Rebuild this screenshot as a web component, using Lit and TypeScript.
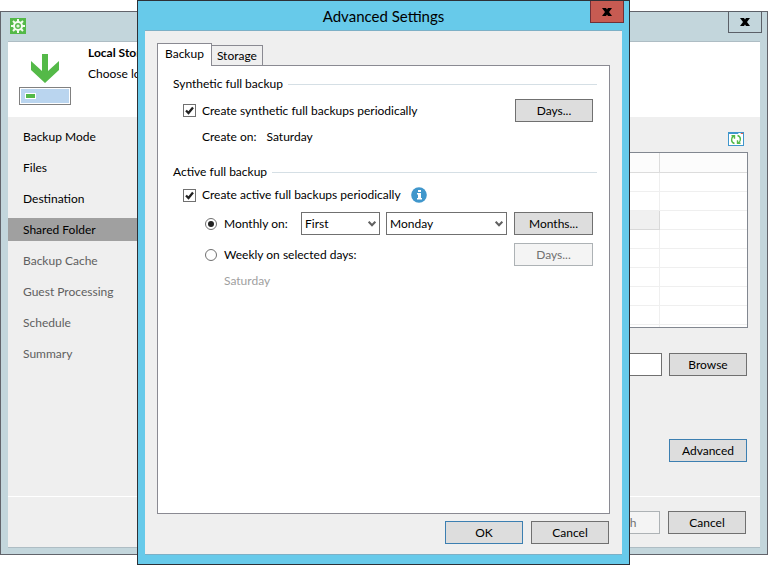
import { LitElement, html, css } from "lit";
import { customElement, property, state } from "lit/decorators.js";
import { classMap } from "lit/directives/class-map.js";

const controls = css`
  * {
    box-sizing: border-box;
  }
  button,
  input,
  select {
    font: inherit;
    color: inherit;
    margin: 0;
  }
  .btn {
    width: 78px;
    height: 23px;
    padding: 0;
    border: 1px solid #707070;
    border-radius: 0;
    background: #dddddd;
    line-height: 16px;
    flex: none;
  }
  .btn.focused {
    border-color: #3c7fb1;
  }
  .btn:disabled {
    background: #f4f4f4;
    border-color: #adb2b5;
    color: #707070;
  }
  .close {
    width: 34px;
    height: 22px;
    padding: 0;
    display: flex;
    align-items: center;
    justify-content: center;
    border-radius: 0;
  }
  svg {
    display: block;
  }
`;

const closeGlyph = html`<svg width="10" height="8" viewBox="0 0 10 8" aria-hidden="true">
  <path d="M0 0h4l1 1.6L6 0h4L7 4l3 4H6L5 6.4 4 8H0l3-4z" fill="#000" />
</svg>`;

@customElement("wizard-window")
export class WizardWindow extends LitElement {
  @state() steps = [
    { name: "Backup Mode", done: true },
    { name: "Files", done: true },
    { name: "Destination", done: true },
    { name: "Shared Folder", current: true, done: true },
    { name: "Backup Cache" },
    { name: "Guest Processing" },
    { name: "Schedule" },
    { name: "Summary" },
  ];

  static styles = [
    controls,
    css`
      :host {
        display: flex;
        flex-direction: column;
        box-sizing: border-box;
        border: 1px solid #62646b;
        background: #c3d6dc;
        padding: 0 7px 6px;
      }
      .titlebar {
        display: flex;
        justify-content: space-between;
        height: 29px;
        padding: 6px 0 0 2px;
      }
      .close {
        margin: -7px -2px 0 0;
        border: 1px solid #5b6068;
        background: #c3d6dc;
      }
      .client {
        flex: 1;
        display: flex;
        flex-direction: column;
        background: #efefef;
        border: solid #aebdc4;
        border-width: 1px 0;
      }
      header {
        display: flex;
        gap: 17px;
        height: 75px;
        padding: 3px 11px;
        background: #fff;
        white-space: nowrap;
      }
      .hero {
        margin-top: 9px;
      }
      h1 {
        margin: 0 0 5px;
        font-size: 12px;
        line-height: 16px;
        font-weight: 700;
      }
      p {
        margin: 0;
      }
      .body {
        flex: 1;
        display: flex;
      }
      nav {
        width: 160px;
        padding-top: 8px;
        display: flex;
        flex-direction: column;
        gap: 8px;
      }
      nav a {
        line-height: 23px;
        padding-left: 15px;
        color: #606060;
        text-decoration: none;
      }
      nav a.done {
        color: #000;
      }
      nav a.current {
        background: #a0a0a0;
      }
      main {
        flex: 1;
        padding: 15px 12px 0 10px;
        display: flex;
        flex-direction: column;
      }
      .refresh {
        align-self: flex-end;
        margin-right: 4px;
        padding: 0;
        border: 0;
        background: none;
      }
      table {
        margin-top: 6px;
        border: 1px solid #828790;
        background: #fff;
        border-collapse: separate;
        border-spacing: 0;
        table-layout: fixed;
        width: 100%;
      }
      th,
      td {
        height: 19px;
        padding: 0;
        border: solid #efefef;
        border-width: 0 1px 1px 0;
      }
      th {
        height: 20px;
        background: #fcfcfc;
        border-color: #dcdcdc;
      }
      tr > :last-child {
        width: 87px;
        border-right: 0;
      }
      .selected {
        background: #f0f0f0;
        border-color: #d9d9d9;
      }
      tfoot td {
        height: 2px;
        border-bottom: 0;
      }
      .path {
        display: flex;
        gap: 7px;
        margin: 25px 1px 63px 0;
      }
      .path input {
        flex: 1;
        min-width: 0;
        height: 23px;
        border: 1px solid #707070;
        background: #fff;
      }
      .advanced {
        align-self: flex-end;
        margin-right: 1px;
      }
      footer {
        display: flex;
        justify-content: flex-end;
        gap: 8px;
        padding: 14px 14px 13px;
        border-top: 1px solid #fff;
      }
    `,
  ];

  render() {
    return html`
      <div class="titlebar">
        <svg width="16" height="16" viewBox="0 0 16 16" aria-hidden="true">
          <rect width="16" height="16" fill="#54b948" />
          <g fill="none" stroke="#f4fcf0">
            <circle cx="8" cy="8" r="4" stroke-width="2" />
            <circle cx="8" cy="8" r="1" stroke-width="1.2" />
            <path
              d="M8 1v3M8 12v3M1 8h3M12 8h3M3 3l2.200 2.200M10.800 10.800 13 13M13 3l-2.200 2.200M5.200 10.800 3 13"
              stroke-width="2"
            />
          </g>
        </svg>
        <button class="close" aria-label="Close">${closeGlyph}</button>
      </div>
      <div class="client">
        <header>
          <svg class="hero" width="52" height="52" viewBox="0 0 52 52" aria-hidden="true">
            <path d="M23 0h6v17L40 7v9L26 29 12 16V7l11 10z" fill="#54b948" />
            <rect x=".5" y="33.5" width="51" height="17" fill="#fff" stroke="#808080" />
            <rect x="2" y="35" width="48" height="14" fill="#bad5ef" />
            <rect x="6.5" y="39.5" width="10" height="5" fill="#54b948" stroke="#fff" />
          </svg>
          <div>
            <h1>Local Storage</h1>
            <p>Choose local storage.</p>
          </div>
        </header>
        <div class="body">
          <nav>
            ${this.steps.map(
              (s) => html`<a href="#" class=${classMap({ done: !!s.done, current: !!s.current })}>${s.name}</a>`
            )}
          </nav>
          <main>
            <button class="refresh" aria-label="Refresh">
              <svg width="16" height="14" viewBox="0 0 16 14">
                <rect x=".5" y=".5" width="15" height="13" fill="#fff" stroke="#3f96cc" />
                <path d="M0 0h10v2H0z" fill="#3f96cc" />
                <path d="M10 1h1v1h-1zM12 1h1v1h-1z" fill="#bfe0f2" />
                <path d="M13 1h2v1h-2z" fill="#e05a4e" />
                <g fill="none" stroke="#54b948" stroke-width="1.4">
                  <path d="M6.500 11.500C2.800 10.500 2.800 6 5.500 4.200M3.500 3.700h3v3" />
                  <path d="M9.500 3.500c3.700 1 3.700 5.500 1 7.300M12.500 11.300h-3v-3" />
                </g>
              </svg>
            </button>
            <table>
              <thead>
                <tr><th></th><th></th></tr>
              </thead>
              <tbody>
                ${Array.from(
                  { length: 8 },
                  (_, i) => html`<tr><td class=${classMap({ selected: i === 2 })}></td><td></td></tr>`
                )}
              </tbody>
              <tfoot>
                <tr><td></td><td></td></tr>
              </tfoot>
            </table>
            <div class="path">
              <input type="text" aria-label="Folder" />
              <button class="btn">Browse</button>
            </div>
            <button class="btn focused advanced">Advanced</button>
          </main>
        </div>
        <footer>
          <button class="btn" disabled>Finish</button>
          <button class="btn">Cancel</button>
        </footer>
      </div>
    `;
  }
}

@customElement("settings-dialog")
export class SettingsDialog extends LitElement {
  @property() tab = "Backup";

  static styles = [
    controls,
    css`
      :host {
        display: flex;
        flex-direction: column;
        box-sizing: border-box;
        border: 1px solid #2d3036;
        background: #67caea;
        padding: 0 7px 9px;
      }
      .titlebar {
        display: grid;
        height: 29px;
      }
      .titlebar > * {
        grid-area: 1 / 1;
      }
      h2 {
        margin: 0;
        font-size: 15px;
        font-weight: 400;
        line-height: 30px;
        text-align: center;
      }
      .close {
        justify-self: end;
        margin-right: -2px;
        border: 1px solid #6f3038;
        border-top: 0;
        background: #c75b52;
      }
      .client {
        flex: 1;
        display: flex;
        flex-direction: column;
        padding: 12px 12px 10px;
        background: #efefef;
        border: solid #7db0c6;
        border-width: 1px 0;
      }
      .tabs {
        display: flex;
        align-items: flex-end;
      }
      .tab {
        height: 20px;
        padding: 0 5px;
        border: 1px solid #8a8a92;
        border-width: 1px 1px 0 0;
        background: #efefef;
        border-radius: 0;
        line-height: 18px;
      }
      .tab.active {
        height: 23px;
        margin-bottom: -1px;
        padding: 0 7px 2px;
        border-left-width: 1px;
        background: #fff;
        z-index: 1;
      }
      .panel {
        flex: 1;
        padding: 10px 12px 10px 15px;
        border: 1px solid #8a8a92;
        background: #fff;
      }
      .group {
        display: flex;
        align-items: center;
        gap: 5px;
        margin: 0;
        font-size: 12px;
        font-weight: 400;
        line-height: 16px;
      }
      .group::after {
        content: "";
        flex: 1;
        height: 1px;
        background: #d5dfe5;
      }
      .options {
        display: grid;
        gap: 7px;
        padding: 7px 4px 0 10px;
      }
      section + section {
        margin-top: 19px;
      }
      .row {
        display: flex;
        align-items: center;
        min-height: 16px;
      }
      .row > .btn {
        margin-left: auto;
      }
      .sub {
        padding-left: 19px;
        gap: 10px;
      }
      label {
        display: flex;
        align-items: center;
        gap: 6px;
      }
      .check {
        display: grid;
      }
      .check > * {
        grid-area: 1 / 1;
        pointer-events: none;
      }
      .check input {
        appearance: none;
        width: 13px;
        height: 13px;
        border: 1px solid #707070;
        background: #fff;
        pointer-events: auto;
      }
      .check input:not(:checked) + svg {
        visibility: hidden;
      }
      .monthly,
      .weekly {
        padding-left: 22px;
      }
      .weekly label,
      .monthly label {
        gap: 7px;
      }
      .monthly {
        margin-top: 2px;
      }
      .weekly {
        margin-top: 1px;
      }
      .monthly > label {
        width: 96px;
      }
      .monthly .btn,
      .weekly .btn {
        width: 79px;
      }
      input[type="radio"] {
        appearance: none;
        display: grid;
        place-items: center;
        width: 12px;
        height: 12px;
        border: 1px solid #707070;
        border-radius: 50%;
        background: #fff;
      }
      input[type="radio"]:checked::before {
        content: "";
        width: 6px;
        height: 6px;
        border-radius: 50%;
        background: #222;
      }
      .pick {
        display: grid;
        align-items: center;
        margin-right: 6px;
      }
      .pick > * {
        grid-area: 1 / 1;
      }
      .pick svg {
        justify-self: end;
        margin-right: 4px;
        pointer-events: none;
      }
      select {
        appearance: none;
        height: 23px;
        width: 79px;
        padding: 0 3px;
        border: 1px solid #707070;
        border-radius: 0;
        background: #fff;
      }
      select.day {
        width: 121px;
      }
      .info {
        margin-left: 10px;
      }
      .note {
        padding-left: 41px;
        color: #a0a0a0;
      }
      .actions {
        display: flex;
        justify-content: flex-end;
        gap: 8px;
        margin: 7px 1px 0 0;
      }
    `,
  ];

  private tick(label: string) {
    return html`<label>
      <span class="check">
        <input type="checkbox" checked />
        <svg width="13" height="13" viewBox="0 0 13 13" aria-hidden="true">
          <path d="M3 6.500 5.500 9 10 3.500" fill="none" stroke="#222" stroke-width="2.300" />
        </svg>
      </span>
      ${label}
    </label>`;
  }

  private pick(name: string, value: string, kind = "") {
    return html`<span class="pick">
      <select class=${kind} aria-label=${name}><option>${value}</option></select>
      <svg width="8" height="6" viewBox="0 0 8 6" aria-hidden="true">
        <path d="M.7.700 4 4.300 7.300.7" fill="none" stroke="#606060" stroke-width="2" />
      </svg>
    </span>`;
  }

  render() {
    return html`
      <div class="titlebar">
        <h2>Advanced Settings</h2>
        <button class="close" aria-label="Close">${closeGlyph}</button>
      </div>
      <div class="client">
        <div class="tabs" role="tablist">
          ${["Backup", "Storage"].map(
            (t) => html`<button
              role="tab"
              aria-selected=${t === this.tab}
              class=${classMap({ tab: true, active: t === this.tab })}
            >${t}</button>`
          )}
        </div>
        <div class="panel" role="tabpanel">
          <section>
            <h3 class="group">Synthetic full backup</h3>
            <div class="options">
              <div class="row">
                ${this.tick("Create synthetic full backups periodically")}
                <button class="btn">Days...</button>
              </div>
              <div class="row sub"><span>Create on:</span><span>Saturday</span></div>
            </div>
          </section>
          <section>
            <h3 class="group">Active full backup</h3>
            <div class="options">
              <div class="row">
                ${this.tick("Create active full backups periodically")}
                <svg class="info" width="16" height="16" viewBox="0 0 16 16" role="img" aria-label="Information">
                  <circle cx="8" cy="8" r="7.800" fill="#4097cc" />
                  <path d="M7 3h3v2H7zM6 6h4v5h1v1.500H6V11h1V7.500H6z" fill="#fff" />
                </svg>
              </div>
              <div class="row monthly">
                <label><input type="radio" name="when" checked />Monthly on:</label>
                ${this.pick("Week", "First")} ${this.pick("Day", "Monday", "day")}
                <button class="btn">Months...</button>
              </div>
              <div class="row weekly">
                <label><input type="radio" name="when" />Weekly on selected days:</label>
                <button class="btn" disabled>Days...</button>
              </div>
              <div class="row note">Saturday</div>
            </div>
          </section>
        </div>
        <div class="actions">
          <button class="btn focused">OK</button>
          <button class="btn">Cancel</button>
        </div>
      </div>
    `;
  }
}

@customElement("app-root")
export class AppRoot extends LitElement {
  static styles = css`
    :host {
      display: grid;
      grid-template-columns: minmax(0, 1fr);
      min-height: 100vh;
      background: #fff;
      color: #000;
      font: 12px/16px Lato, "Open Sans", sans-serif;
    }
    wizard-window,
    settings-dialog {
      grid-area: 1 / 1;
    }
    wizard-window {
      margin: 11px 0 10px;
    }
    settings-dialog {
      margin: 0 138px 0 137px;
      z-index: 1;
    }
  `;

  render() {
    return html`
      <wizard-window></wizard-window>
      <settings-dialog></settings-dialog>
    `;
  }
}
